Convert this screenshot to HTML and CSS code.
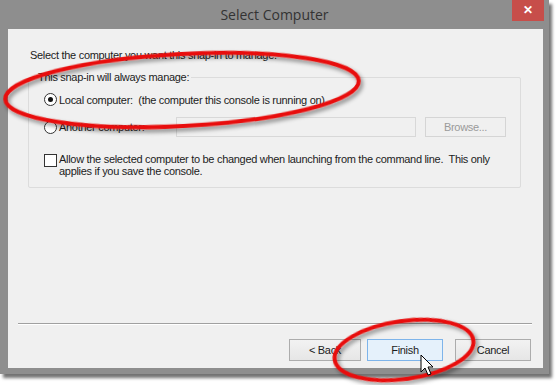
FILE: index.html
```html
<!DOCTYPE html>
<html lang="en">
<head>
    <meta charset="UTF-8">
    <title>Select Computer</title>
    <link rel="stylesheet" href="styles.css">
</head>
<body>
    <div class="screen">
        <div class="window">
            <div class="titlebar">
                <span></span>
                <span class="title">Select Computer</span>
                <span class="close">&#x2715;</span>
            </div>
            <div class="client">
                <p class="intro">Select the computer you want this snap-in to manage.</p>
                <fieldset class="group">
                    <legend>This snap-in will always manage:</legend>
                    <label class="option">
                        <span class="radio checked"></span>
                        Local computer:&nbsp; (the computer this console is running on)
                    </label>
                    <div class="option-row">
                        <label class="option">
                            <span class="radio"></span>
                            Another computer:
                        </label>
                        <span class="field"></span>
                        <span class="btn disabled">Browse...</span>
                    </div>
                    <label class="check-row">
                        <span class="checkbox"></span>
                        <span>Allow the selected computer to be changed when launching from the command line.&nbsp; This only applies if you save the console.</span>
                    </label>
                </fieldset>
                <div class="spacer"></div>
                <div class="separator"></div>
                <div class="buttons">
                    <span class="btn back">&lt; Back</span>
                    <span class="btn default">Finish</span>
                    <span class="btn cancel">Cancel</span>
                </div>
            </div>
        </div>

        <!-- red annotation marks drawn over the screenshot -->
        <svg class="marks" width="558" height="385" viewBox="0 0 558 385">
            <defs>
                <filter id="shade" x="-10%" y="-20%" width="120%" height="150%">
                    <feDropShadow dx="2" dy="3" stdDeviation="2" flood-color="#000" flood-opacity="0.45"/>
                </filter>
            </defs>
            <ellipse cx="182" cy="90" rx="177" ry="36" transform="rotate(-3 182 90)"
                     fill="none" stroke="#e8100c" stroke-width="4" filter="url(#shade)"/>
            <ellipse cx="404" cy="350" rx="70" ry="29" transform="rotate(-8 404 350)"
                     fill="none" stroke="#e8100c" stroke-width="4" filter="url(#shade)"/>
            <path d="M421 355 L421 372 L425 368 L428 375 L431 374 L428 367 L433 367 Z"
                  fill="#fff" stroke="#000" stroke-width="1" stroke-linejoin="round"/>
        </svg>
    </div>
</body>
</html>
```

FILE: styles.css
```css
body {
    margin: 0;
    background: #fff;
    font-family: 'Liberation Sans', Arial, sans-serif;
    font-size: 11px;
    letter-spacing: -0.3px;
    color: #1c1c1c;
}
.screen {
    position: relative;
    width: 558px;
    height: 385px;
    overflow: hidden;
}
.window {
    width: 549px;
    height: 374px;
    background: #8e8e8e;
    box-shadow: 3px 4px 3px rgba(0,0,0,0.55);
    display: flex;
    flex-direction: column;
}
.titlebar {
    height: 29px;
    display: grid;
    grid-template-columns: 1fr auto 1fr;
}
.title {
    font-family: 'Open Sans', sans-serif;
    font-size: 14px;
    letter-spacing: 0;
    color: #333;
    line-height: 29px;
}
.close {
    justify-self: end;
    margin-right: 5px;
    width: 32px;
    height: 21px;
    background: #c74e4a;
    color: #fff;
    font-size: 12px;
    font-weight: bold;
    text-align: center;
    line-height: 21px;
}
.client {
    flex: 1;
    margin: 0 6px 6px 8px;
    background: #f0f0f0;
    padding: 20px 22px 0 20px;
    display: flex;
    flex-direction: column;
}
.intro {
    margin: 0 0 10px 2px;
}
.group {
    margin: 0;
    padding: 10px 10px 10px 10px;
    border: 1px solid #dcdcdc;
    border-radius: 2px;
}
.group legend {
    padding: 0 2px;
    margin-left: -3px;
}
.option {
    display: flex;
    align-items: center;
    gap: 2px;
    margin-left: 5px;
}
.radio {
    width: 13px;
    height: 13px;
    border: 1px solid #333;
    border-radius: 50%;
    background: #fff;
    box-sizing: border-box;
    position: relative;
}
.radio.checked::after {
    content: "";
    position: absolute;
    left: 3px;
    top: 3px;
    width: 5px;
    height: 5px;
    border-radius: 50%;
    background: #111;
}
.option-row {
    display: flex;
    align-items: center;
    margin-top: 11px;
}
.option-row .option {
    width: 132px;
}
.field {
    width: 238px;
    height: 18px;
    border: 1px solid #d8d8d8;
    background: #f0f0f0;
}
.btn {
    display: inline-block;
    box-sizing: border-box;
    width: 76px;
    height: 22px;
    line-height: 20px;
    text-align: center;
    border: 1px solid #acacac;
    background: linear-gradient(#f2f2f2, #e6e6e6);
    color: #1c1c1c;
}
.btn.back {
    width: 72px;
}
.btn.disabled {
    width: 81px;
    height: 20px;
    line-height: 18px;
    margin-left: 9px;
    border-color: #d5d5d5;
    background: #f0f0f0;
    color: #9a9a9a;
}
.btn.default {
    border-color: #7eb4ea;
    background: #e5f1fb;
}
.btn.cancel {
    margin-left: 6px;
}
.check-row {
    display: flex;
    align-items: flex-start;
    gap: 2px;
    margin-top: 17px;
    line-height: 11.5px;
    margin-left: 5px;
}
.checkbox {
    flex: none;
    width: 13px;
    height: 13px;
    border: 1px solid #333;
    background: #fff;
    box-sizing: border-box;
}
.spacer {
    flex: 1;
}
.separator {
    height: 1px;
    background: #a0a0a0;
    border-bottom: 1px solid #fff;
    margin: 0 -11px 0 -10px;
}
.buttons {
    display: flex;
    justify-content: flex-end;
    gap: 6px;
    padding: 14px 0 7px 0;
    margin-right: -10px;
}
.marks {
    position: absolute;
    left: 0;
    top: 0;
}
```
